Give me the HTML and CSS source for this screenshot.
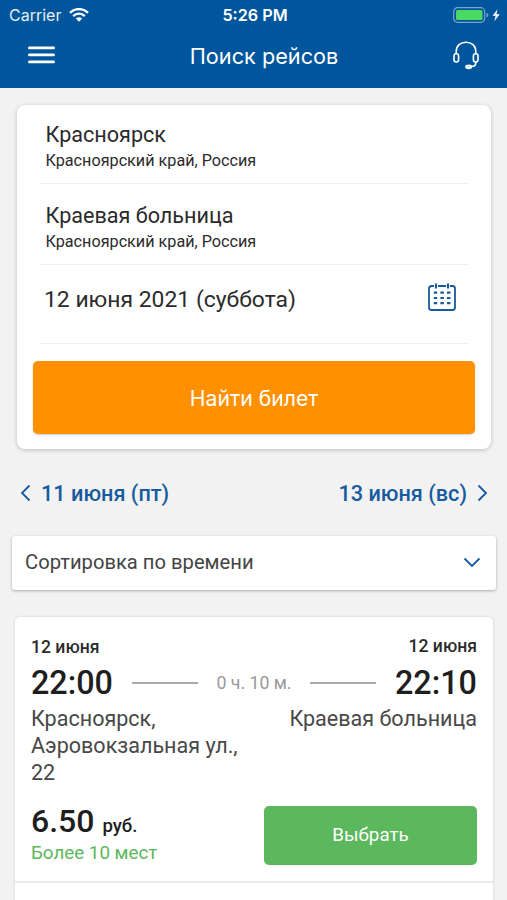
FILE: index.html
```html
<!DOCTYPE html>
<html lang="ru">
<head>
<meta charset="utf-8">
<title>Поиск рейсов</title>
<link rel="stylesheet" href="styles.css">
</head>
<body>
<header class="header">
  <div class="status">
    <div class="carrier"><span>Carrier</span>
      <svg width="20" height="14" viewBox="0 0 20 14" fill="none" stroke="#fff" stroke-width="2.3"><path d="M1 4.900C6-.2 14-.2 19 4.900M4.200 8.100c3.300-3.300 8.300-3.300 11.600 0"/><path d="M6.800 10.600c1.900-1.800 4.500-1.800 6.400 0L10 13.800z" fill="#fff" stroke="none"/></svg>
    </div>
    <div class="clock">5:26 PM</div>
    <div class="battery">
      <svg width="48" height="16" viewBox="0 0 48 16"><rect x=".7" y=".7" width="31" height="14.6" rx="4" fill="none" stroke="#7ba5cd" stroke-width="1.2"/><rect x="3" y="3" width="26.5" height="10" rx="1.5" fill="#4bd964"/><path d="M33.500 5.700c2.400.7 2.400 3.900 0 4.600z" fill="#7ba5cd"/><path d="M44.500 2.200L39.500 8.800h3.100l-1.300 5.400 5.400-7h-3.200z" fill="#fff"/></svg>
    </div>
  </div>
  <div class="navbar">
    <svg class="menu" width="27" height="18" viewBox="0 0 27 18" stroke="#fff" stroke-width="2.7" stroke-linecap="round"><path d="M1.400 1.900h24.200M1.400 8.900h24.200M1.400 15.900h24.200"/></svg>
    <h1 class="title">Поиск рейсов</h1>
    <svg class="headset" width="26" height="29" viewBox="0 0 26 29" fill="none" stroke="#fff" stroke-width="1.6"><path d="M3.200 13V10.500C3.200 4.500 7.500 1.200 13 1.200s9.800 3.300 9.800 9.300V13"/><rect x="1" y="12.800" width="4.600" height="8.200" rx="2.200"/><rect x="20.400" y="12.800" width="4.600" height="8.200" rx="2.200"/><path d="M22.700 21v1.400c0 1.800-1.600 2.800-4 2.900"/><ellipse cx="15.700" cy="25.800" rx="2.800" ry="1.600" fill="#dce8f4"/></svg>
  </div>
</header>
<main>
  <section class="search">
    <div class="field"><div class="place">Красноярск</div><div class="region">Красноярский край, Россия</div></div>
    <div class="field"><div class="place">Краевая больница</div><div class="region">Красноярский край, Россия</div></div>
    <div class="field date"><span>12 июня 2021 (суббота)</span>
      <svg width="28" height="28" viewBox="0 0 28 28" fill="none" stroke="#165b9e" stroke-width="1.8"><path d="M6 3H3.500Q1 3 1 5.500V24.500Q1 27 3.500 27H24.500Q27 27 27 24.500V5.500Q27 3 24.500 3H22M10 3h8"/><path d="M8 .5v5M20 .5v5" stroke-width="2.200"/><path d="M5.800 9.700h17M5.800 15h17M5.800 20.200h17" stroke-width="2.200" stroke-dasharray="3.400 3.200"/></svg>
    </div>
    <button class="find">Найти билет</button>
  </section>
  <nav class="days">
    <a class="day prev"><svg width="11" height="18" viewBox="0 0 11 18"><path d="M9.500 1.500L2 9l7.500 7.500"/></svg><span>11 июня (пт)</span></a>
    <a class="day next"><span>13 июня (вс)</span><svg width="11" height="18" viewBox="0 0 11 18"><path d="M1.500 1.500L9 9l-7.500 7.500"/></svg></a>
  </nav>
  <div class="sort"><span>Сортировка по времени</span><svg width="18" height="11" viewBox="0 0 18 11"><path d="M1.500 1.500L9 9l7.500-7.500"/></svg></div>
  <article class="trip">
    <div class="dates"><span>12 июня</span><span class="arrival">12 июня</span></div>
    <div class="times"><span class="time">22:00</span><i class="rule"></i><span class="duration">0 ч. 10 м.</span><i class="rule"></i><span class="time">22:10</span></div>
    <div class="stops"><div class="stop">Красноярск,<br>Аэровокзальная ул.,<br>22</div><div class="stop">Краевая больница</div></div>
    <div class="buy">
      <div><div class="price">6.50 <small>руб.</small></div><div class="seats">Более 10 мест</div></div>
      <button class="choose">Выбрать</button>
    </div>
  </article>
</main>
</body>
</html>
```
FILE: styles.css
```css
* { box-sizing: border-box; }
body {
  margin: 0;
  height: 900px;
  overflow: hidden;
  background: #f2f2f2;
  color: #2b2b2b;
  font-family: Roboto, "Liberation Sans", sans-serif;
}
button { border: 0; padding: 0; display: block; color: #fff; font-family: inherit; }
.header { height: 88px; background: #00569c; color: #fff; }
.status {
  height: 30px;
  display: grid;
  grid-template-columns: 1fr auto 1fr;
  align-items: center;
  padding: 0 6px 0 9px;
  font-family: Inter, sans-serif;
  font-size: 16px;
}
.carrier { display: flex; align-items: center; gap: 8px; color: #e5eef6; }
.clock { font-weight: 600; font-size: 16.2px; }
.battery { display: flex; justify-content: flex-end; }
.navbar { height: 52px; display: flex; align-items: center; padding: 0 28px; }
.menu { margin-top: -3px; }
.headset { margin-top: -1px; }
.title {
  flex: 1;
  margin: 0;
  padding-left: 20px;
  text-align: center;
  font: 400 21.7px/50px Inter, sans-serif;
}
.search {
  height: 344px;
  margin: 17px 16px 0 17px;
  padding: 0 16px 0 16px;
  background: #fff;
  border-radius: 8px;
  box-shadow: 0 1px 4px rgba(0,0,0,.22);
}
.field {
  height: 81px;
  margin: 0 6px 0 7px;
  padding: 17px 5px 0 5.5px;
  border-bottom: 1px solid #f0f0f0;
}
.field:first-child { height: 79px; padding-top: 15px; }
.place { font-size: 21.6px; line-height: 30px; }
.region { font-size: 16.2px; line-height: 22px; }
.date {
  height: 79px;
  display: flex;
  align-items: flex-start;
  justify-content: space-between;
  padding: 20px 13px 0 4px;
  font-size: 22.9px;
  line-height: 30px;
}
.date svg { margin-top: -2px; }
.find {
  width: 100%;
  height: 73px;
  margin-top: 17px;
  border-radius: 5px;
  background: #ff9000;
  box-shadow: 0 1px 2px rgba(0,0,0,.2);
  font: 400 21.2px Inter, sans-serif;
}
.days {
  height: 86px;
  display: flex;
  justify-content: space-between;
  align-items: center;
  padding: 2px 19px 0 20px;
  color: #165b9e;
  font-size: 21.7px;
  font-weight: 500;
}
.day { display: flex; align-items: center; gap: 10px; }
.day svg, .sort svg { fill: none; stroke: #165b9e; stroke-width: 1.8; }
.sort {
  height: 54px;
  margin: 1px 11px 0 12px;
  padding: 0 15px 2px 13px;
  display: flex;
  align-items: center;
  justify-content: space-between;
  background: #fff;
  border-radius: 3px;
  box-shadow: 0 1px 3px rgba(0,0,0,.3);
  color: #444;
  font-size: 20.2px;
}
.trip {
  height: 320px;
  margin: 27px 14px 0 15px;
  padding: 18px 16px 0;
  background: #fff;
  border-radius: 5px;
  box-shadow: 0 0 3px rgba(0,0,0,.15);
}
.dates {
  display: flex;
  justify-content: space-between;
  height: 25px;
  font-size: 17.6px;
  font-weight: 500;
  line-height: 25px;
}
.arrival { margin-top: -1px; }
.times {
  height: 45px;
  display: flex;
  align-items: center;
  justify-content: space-between;
}
.time { font-size: 32.3px; font-weight: 500; color: #1e1e1e; }
.duration { color: #999; font-size: 17.7px; }
.rule { width: 66px; height: 2px; background: #aaa; }
.stops {
  height: 101px;
  display: flex;
  justify-content: space-between;
  color: #484848;
  font-size: 21.55px;
  line-height: 27px;
}
.buy {
  height: 77px;
  margin: 0 -16px;
  padding: 0 16px;
  display: flex;
  justify-content: space-between;
  border-bottom: 2px solid #e9e9e9;
}
.price { color: #1e1e1e; font-size: 32px; font-weight: 500; line-height: 32px; margin-top: -1px; }
.price small { font-size: 18.6px; }
.seats { color: #5cb85c; font-size: 18.8px; line-height: 30px; margin-top: -4px; }
.choose {
  width: 213px;
  height: 59px;
  padding-bottom: 1px;
  border-radius: 5px;
  background: #5cb85c;
  font-size: 18.8px;
}
```
